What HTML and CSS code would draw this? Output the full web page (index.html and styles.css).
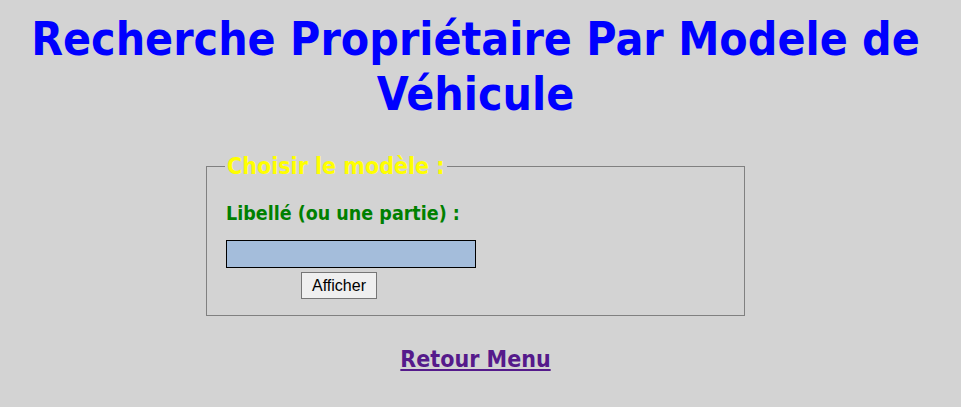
FILE: index.html
```html
<!DOCTYPE html>
<html lang="fr">
<head>
<meta charset="utf-8">
<title>Recherche Propriétaire</title>
<link rel="stylesheet" href="styles.css">
</head>
<body>
<h1 class="title">Recherche Propriétaire Par Modele de Véhicule</h1>
<form class="form">
  <fieldset class="box">
    <legend class="legend">Choisir le modèle :</legend>
    <p class="label">Libellé (ou une partie) :</p>
    <input class="field" type="text">
    <div class="actions"><button class="btn" type="button">Afficher</button></div>
  </fieldset>
</form>
<p class="back"><a class="back-link" href="#">Retour Menu</a></p>
</body>
</html>
```
FILE: styles.css
```css
html, body { background: #d3d3d3; }
body {
  margin: 0;
  padding: 8px 18px 8px 8px;
  font-family: "DejaVu Sans Condensed", Tahoma, sans-serif;
}
.title {
  margin: 4px 0 0;
  text-align: center;
  color: #0000ff;
  font-size: 46px;
  line-height: 55px;
  font-weight: bold;
}
.form {
  width: 539px;
  margin: 31px auto 0;
}
.box {
  margin: 0;
  padding: 0 18px 16px 19px;
  border: 1px solid #808080;
}
.legend {
  color: #ffff00;
  font-weight: bold;
  font-size: 23px;
  padding: 0 2px;
  margin-left: -1px;
}
.label {
  margin: 24px 0 0;
  color: #008000;
  font-weight: bold;
  font-size: 19.5px;
  line-height: 22px;
}
.field {
  display: block;
  margin: 15px 0 0;
  width: 250px;
  height: 28px;
  box-sizing: border-box;
  background: #a4bddb;
  border: 1px solid #000;
  padding: 0 4px;
}
.actions { margin: 4px 0 0 75px; }
.btn {
  font-family: "Liberation Sans", Arial, sans-serif;
  font-size: 16px;
  height: 27px;
  width: 76px;
  padding: 0;
  background: #efefef;
  border: 1px solid #767676;
  color: #000;
}
.back {
  text-align: center;
  margin: 30px 0 0;
  font-weight: bold;
  font-size: 23px;
}
.back-link { color: #551a8b; }
```
